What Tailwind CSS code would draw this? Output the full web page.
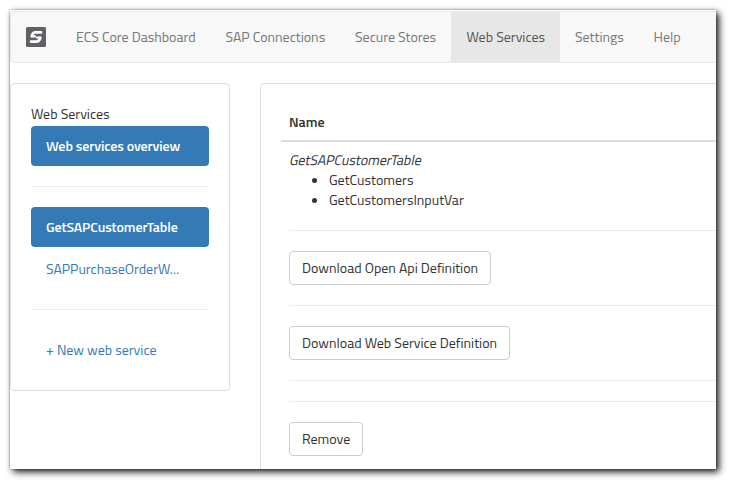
<!DOCTYPE html>
<html lang="en">
<head>
<meta charset="utf-8">
<title>ECS Core Dashboard</title>
<script src="https://cdn.jsdelivr.net/npm/@tailwindcss/browser@4"></script>
</head>
<body class="bg-white w-[734px] h-[487px] overflow-hidden p-[10px] font-['Titillium_Web',Roboto,sans-serif] text-[14px] leading-5 text-[#333]">
<div class="w-[706px] h-[459px] bg-white shadow-[0_0_2px_0px_rgba(0,0,0,0.4),3px_3px_7px_0px_rgba(0,0,0,0.9)]">
<div class="w-full h-full overflow-hidden pt-px">
  <nav class="w-[760px] h-[52px] flex items-stretch border border-[#e7e7e7] rounded bg-[#f8f8f8] text-[#777] whitespace-nowrap leading-[50px]">
    <a class="w-[50px] flex items-center pl-[15px]">
      <svg class="w-5 h-5" viewBox="0 0 20 20" fill="none"><rect width="20" height="20" rx="1.5" fill="#606164"/><path d="M15 5.4H9.8Q7.2 5.4 6.2 7.6L5.6 9.2M5 14.6H10.2Q12.8 14.6 13.8 12.4L14.4 10.8" stroke="#fff" stroke-width="2.6" stroke-linecap="round" stroke-linejoin="round"/><path d="M5.8 9.4H9M11 10.6H14.2" stroke="#fff" stroke-width="2.2" stroke-linecap="round"/></svg>
    </a>
    <a class="w-[150px] pl-[15px]"><span>ECS Core Dashboard</span></a>
    <a class="w-[130px] pl-[14.5px]"><span>SAP Connections</span></a>
    <a class="w-[110px] pl-[14px]"><span>Secure Stores</span></a>
    <a class="w-[109px] pl-[15.5px] bg-[#e7e7e7] text-[#555]"><span>Web Services</span></a>
    <a class="w-[79px] pl-[15px]"><span>Settings</span></a>
    <a class="w-[57px] pl-[14.5px]"><span>Help</span></a>
  </nav>
  <main class="flex mt-5 gap-[30px] whitespace-nowrap">
    <aside class="w-[220px] h-[308px] shrink-0 border border-[#ddd] rounded px-5 pt-5">
      <div class="h-[22px]"><span>Web Services</span></div>
      <a class="block h-10 rounded bg-[#337ab7] text-white font-semibold tracking-[-0.1px] px-[15px] py-[10px]"><span>Web services overview</span></a>
      <hr class="border-[#eee] my-5">
      <a class="block h-10 rounded bg-[#337ab7] text-white font-semibold tracking-[-0.1px] px-[15px] py-[10px]"><span>GetSAPCustomerTable</span></a>
      <a class="block h-10 mt-0.5 text-[#337ab7] px-[15px] py-[10px]"><span>SAPPurchaseOrderW...</span></a>
      <hr class="border-[#eee] my-5">
      <a class="block h-10 text-[#337ab7] px-[15px] py-[10px]"><span>+ New web service</span></a>
    </aside>
    <section class="w-[500px] h-[450px] shrink-0 border border-[#ddd] rounded pl-5 pt-[28px]">
      <div class="h-[30px] pl-2 border-b-2 border-[#ddd] font-semibold"><span>Name</span></div>
      <div class="pl-2 pt-2">
        <div class="h-5 pl-px"><span class="inline-block -skew-x-12">GetSAPCustomerTable</span></div>
        <ul class="list-disc pl-10">
          <li><span>GetCustomers</span></li>
          <li><span>GetCustomersInputVar</span></li>
        </ul>
        <hr class="border-[#eee] my-5">
        <button class="block w-[202px] h-[34px] border border-[#ccc] rounded pl-3 text-left"><span>Download Open Api Definition</span></button>
        <hr class="border-[#eee] my-5">
        <button class="block w-[221px] h-[34px] border border-[#ccc] rounded pl-3 text-left"><span>Download Web Service Definition</span></button>
        <hr class="border-[#eee] my-5">
        <hr class="border-[#eee] my-5">
        <button class="block w-[74px] h-[34px] border border-[#ccc] rounded pl-3 text-left"><span>Remove</span></button>
      </div>
    </section>
  </main>
</div>
</div>
</body>
</html>
